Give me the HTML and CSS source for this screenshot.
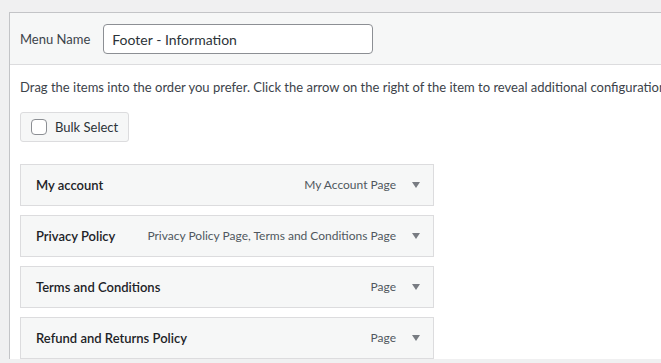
FILE: index.html
```html
<!DOCTYPE html>
<html>
<head>
<meta charset="utf-8">
<link rel="stylesheet" href="styles.css">
</head>
<body>
<div class="panel">
  <div class="header">
    <label class="name-label">Menu Name</label>
    <div class="name-input">Footer - Information</div>
  </div>
  <div class="body">
    <p class="hint">Drag the items into the order you prefer. Click the arrow on the right of the item to reveal additional configuration options.</p>
    <div class="bulk"><span class="check"></span><span>Bulk Select</span></div>
    <ul class="items">
      <li class="item"><span class="title">My account</span><span class="type">My Account Page</span><span class="arrow"></span></li>
      <li class="item"><span class="title">Privacy Policy</span><span class="type">Privacy Policy Page, Terms and Conditions Page</span><span class="arrow"></span></li>
      <li class="item"><span class="title">Terms and Conditions</span><span class="type">Page</span><span class="arrow"></span></li>
      <li class="item"><span class="title">Refund and Returns Policy</span><span class="type">Page</span><span class="arrow"></span></li>
    </ul>
  </div>
</div>
</body>
</html>
```
FILE: styles.css
```css
html, body {
  margin: 0;
  padding: 0;
  background: #f0f0f1;
  overflow: hidden;
  font-family: Lato, "Liberation Sans", Arial, sans-serif;
  font-size: 13px;
  color: #3c434a;
}
.panel {
  margin: 12px 0 0 9px;
  width: 900px;
  border-top: 1px solid #c3c4c7;
  border-left: 1px solid #c3c4c7;
  background: #fff;
}
.header {
  display: flex;
  align-items: center;
  gap: 13px;
  background: #f6f7f7;
  padding: 11px 10px 10px;
  border-bottom: 1px solid #dcdcde;
}
.name-label {
  color: #3c434a;
}
.name-input {
  box-sizing: border-box;
  width: 270px;
  height: 30px;
  border: 1px solid #8c8f94;
  border-radius: 4px;
  background: #fff;
  padding: 0 8px;
  display: flex;
  align-items: center;
  font-size: 14px;
  color: #2c3338;
}
.body {
  padding: 13px 10px 0;
}
.hint {
  margin: 0;
  line-height: 19.5px;
  white-space: nowrap;
  color: #3c434a;
}
.bulk {
  box-sizing: border-box;
  margin-top: 14px;
  display: inline-flex;
  align-items: center;
  gap: 8px;
  height: 30px;
  padding: 0 10px;
  background: #f6f7f7;
  border: 1px solid #dcdcde;
  border-radius: 3px;
  color: #2c3338;
}
.check {
  box-sizing: border-box;
  width: 16px;
  height: 16px;
  border: 1px solid #8c8f94;
  border-radius: 4px;
  background: #fff;
}
.items {
  list-style: none;
  margin: 22px 0 0;
  padding: 0;
  width: 414px;
}
.item {
  box-sizing: border-box;
  height: 42px;
  margin-bottom: 9px;
  display: flex;
  align-items: center;
  padding: 0 13px 0 15px;
  background: #f6f7f7;
  border: 1px solid #dcdcde;
  white-space: nowrap;
}
.title {
  font-weight: 600;
  color: #1d2327;
  flex: 1;
}
.type {
  font-size: 12px;
  color: #50575e;
}
.arrow {
  margin-left: 16px;
  width: 0;
  height: 0;
  border-left: 4px solid transparent;
  border-right: 4px solid transparent;
  border-top: 6px solid #787c82;
}
```
